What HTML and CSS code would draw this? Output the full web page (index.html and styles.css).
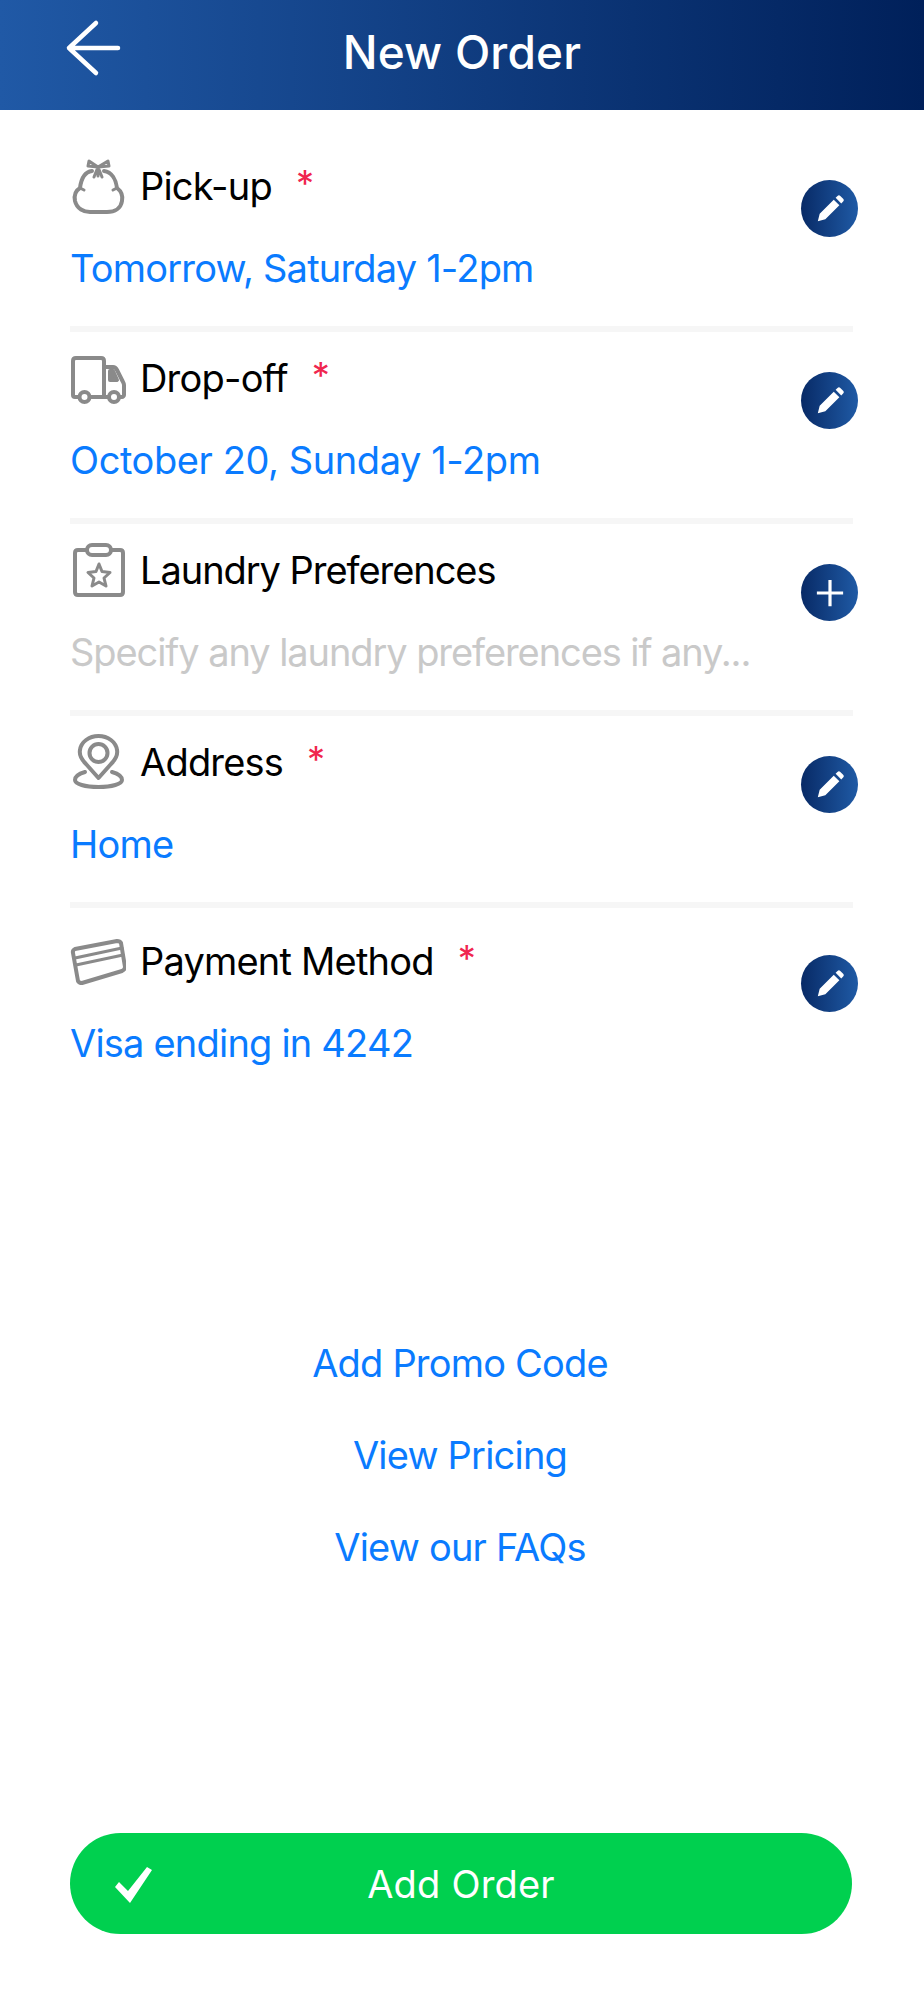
FILE: index.html
```html
<!DOCTYPE html>
<html lang="en">
<head>
  <meta charset="UTF-8">
  <meta name="viewport" content="width=device-width, initial-scale=1.0">
  <title>New Order</title>
  <link rel="stylesheet" href="styles.css">
</head>
<body>
  <header class="topbar">
    <svg class="back" viewBox="0 0 60 60" fill="none" stroke="#fff" stroke-width="4.500" stroke-linecap="round" stroke-linejoin="round">
      <path d="M33 5 L6 30 L33 55 M6 30 H55"/>
    </svg>
    <h1>New Order</h1>
  </header>

  <section class="rows">
    <div class="row">
      <div class="row-main">
        <div class="label">
          <svg class="icon" viewBox="0 0 56 56" fill="none" stroke="#8a8a8a" stroke-width="4" stroke-linecap="round" stroke-linejoin="round">
            <path d="M22 13 C14 14 11 22 10 30 C5 33 4 38 5 43 C7 51 14 54 20 54 H37 C45 54 51 50 52 43 C53 38 51 33 47 30 C46 22 42 14 34 13"/>
            <path d="M28 9 L19 3 L18 8 L28 9 L38 3 L39 8 L28 9 M24 19 L28 9 L32 19 M28 10 V18" stroke-width="3"/>
            <path d="M10 30 L14 32 M47 30 L43 32" stroke-width="3"/>
          </svg>
          <span>Pick-up</span><i class="req">*</i>
        </div>
        <p class="value">Tomorrow, Saturday 1-2pm</p>
      </div>
      <button class="round">
        <svg viewBox="0 0 32 32" fill="#fff"><path d="M3 29 L5 21 L20 6 L26 12 L11 27 Z M22 4 L24 2 C25 1 26 1 27 2 L30 5 C31 6 31 7 30 8 L28 10 Z"/></svg>
      </button>
    </div>

    <div class="row">
      <div class="row-main">
        <div class="label">
          <svg class="icon" viewBox="0 0 56 56" fill="none" stroke="#8a8a8a" stroke-width="4" stroke-linecap="round" stroke-linejoin="round">
            <path d="M9 47 H5 C3.500 47 3 46 3 45 V11 C3 9 4 8 6 8 H31 C33 8 34 9 34 11 V47 H20"/>
            <path d="M34 17 H43 C45 17 46 18 47 20 L52 30 C53 32 54 33 54 35 V45 C54 46 53 47 52 47 H50 M34 47 H38"/>
            <path d="M40 21 H43 L47 30 H40 Z" fill="#8a8a8a"/>
            <circle cx="14.500" cy="47" r="5"/>
            <circle cx="44" cy="47" r="5"/>
          </svg>
          <span>Drop-off</span><i class="req">*</i>
        </div>
        <p class="value loose">October 20, Sunday 1-2pm</p>
      </div>
      <button class="round">
        <svg viewBox="0 0 32 32" fill="#fff"><path d="M3 29 L5 21 L20 6 L26 12 L11 27 Z M22 4 L24 2 C25 1 26 1 27 2 L30 5 C31 6 31 7 30 8 L28 10 Z"/></svg>
      </button>
    </div>

    <div class="row">
      <div class="row-main">
        <div class="label tight">
          <svg class="icon" viewBox="0 0 56 56" fill="none" stroke="#8a8a8a" stroke-width="4" stroke-linecap="round" stroke-linejoin="round">
            <path d="M17 8 H8 C6 8 5 9 5 11 V50 C5 52 6 53 8 53 H50 C52 53 53 52 53 50 V11 C53 9 52 8 50 8 H41"/>
            <rect x="17" y="3" width="24" height="10" rx="5"/>
            <path d="M29 22 L32 29.500 L40 30.500 L34 36 L36 44 L29 40 L22 44 L24 36 L18 30.500 L26 29.500 Z" stroke-width="3"/>
          </svg>
          <span>Laundry Preferences</span>
        </div>
        <p class="value empty">Specify any laundry preferences if any...</p>
      </div>
      <button class="round">
        <svg viewBox="0 0 32 32" fill="none" stroke="#fff" stroke-width="3.400"><path d="M16 2 V30 M2 16 H30"/></svg>
      </button>
    </div>

    <div class="row">
      <div class="row-main">
        <div class="label">
          <svg class="icon" viewBox="0 0 56 56" fill="none" stroke="#8a8a8a" stroke-width="4" stroke-linecap="round" stroke-linejoin="round">
            <path d="M28.500 44 L16 30 C11 25 9 21 10 16 C11 8 19 2 28.500 2 C38 2 46 8 47 16 C48 21 46 25 41 30 Z"/>
            <circle cx="28.500" cy="19" r="9"/>
            <path d="M15 38 C8 40 5 43 5 46 C5 50 15 53 28.500 53 C42 53 52 50 52 46 C52 43 49 40 42 38"/>
          </svg>
          <span>Address</span><i class="req">*</i>
        </div>
        <p class="value">Home</p>
      </div>
      <button class="round">
        <svg viewBox="0 0 32 32" fill="#fff"><path d="M3 29 L5 21 L20 6 L26 12 L11 27 Z M22 4 L24 2 C25 1 26 1 27 2 L30 5 C31 6 31 7 30 8 L28 10 Z"/></svg>
      </button>
    </div>

    <div class="row last">
      <div class="row-main">
        <div class="label">
          <svg class="icon" viewBox="0 0 56 56" fill="none" stroke="#8a8a8a" stroke-width="4" stroke-linecap="round" stroke-linejoin="round">
            <path d="M3 20 C2.500 18 3 17 5 16 L47 8 C49 8 50 8 51 10 L55 34 C55 36 54 37 52 38 L12 50 C10 50 9 50 8 48 Z"/>
            <path d="M5 25 L52 15 M6 32 L53 22" stroke-width="3"/>
          </svg>
          <span>Payment Method</span><i class="req">*</i>
        </div>
        <p class="value">Visa ending in 4242</p>
      </div>
      <button class="round">
        <svg viewBox="0 0 32 32" fill="#fff"><path d="M3 29 L5 21 L20 6 L26 12 L11 27 Z M22 4 L24 2 C25 1 26 1 27 2 L30 5 C31 6 31 7 30 8 L28 10 Z"/></svg>
      </button>
    </div>
  </section>

  <nav class="links">
    <a href="#">Add Promo Code</a>
    <a href="#">View Pricing</a>
    <a href="#">View our FAQs</a>
  </nav>

  <button class="submit">
    <svg viewBox="0 0 42 38" fill="#fff"><path d="M4 21 L8 16 L17 25 L36 1 L41 4 L19 37 Z"/></svg>
    <span>Add Order</span>
  </button>
</body>
</html>
```

FILE: styles.css
```css
* {
  margin: 0;
  padding: 0;
  box-sizing: border-box;
}

body {
  width: 924px;
  height: 2000px;
  overflow: hidden;
  background: #fff;
  font-family: Inter, "Liberation Sans", sans-serif;
  display: flex;
  flex-direction: column;
}

.topbar {
  height: 110px;
  flex: none;
  display: flex;
  align-items: center;
  justify-content: center;
  padding-bottom: 6px;
  position: relative;
  background: linear-gradient(to right, #2059a6, #00205a);
}

.topbar h1 {
  color: #fff;
  font-size: 46px;
  font-weight: 500;
  letter-spacing: 0.2px;
  line-height: 1;
}

.back {
  position: absolute;
  left: 63px;
  top: 18px;
  width: 60px;
  height: 60px;
}

.rows {
  margin-top: 30px;
  padding: 0 70px;
}

.row {
  display: flex;
  justify-content: space-between;
  align-items: flex-start;
  padding: 18px 0 34px;
  border-bottom: 6px solid #f6f6f6;
  margin-right: 1px;
}

.row.last {
  border-bottom: none;
  padding-top: 25px;
}

.label {
  display: flex;
  align-items: center;
  height: 56px;
  font-size: 38px;
  letter-spacing: -0.8px;
  color: #000;
}

.label.tight {
  letter-spacing: -1.05px;
}

.icon {
  width: 56px;
  height: 56px;
  margin-right: 14px;
  flex: none;
}

.req {
  color: #f0264f;
  font-style: normal;
  font-size: 36px;
  margin: -6px 0 0 24px;
}

.value {
  margin-top: 30px;
  font-size: 38px;
  letter-spacing: -0.8px;
  line-height: 48px;
  color: #0a7bff;
  white-space: nowrap;
}

.value.loose {
  letter-spacing: -0.42px;
}

.value.empty {
  color: #c9c9c9;
  letter-spacing: -1.08px;
}

.round {
  width: 57px;
  height: 57px;
  flex: none;
  margin: 22px -5px 0 0;
  border: none;
  border-radius: 50%;
  background: linear-gradient(to right, #082a66, #1f5aa5);
  display: flex;
  align-items: center;
  justify-content: center;
}

.round svg {
  width: 30px;
  height: 30px;
}

.links {
  margin-top: 238px;
  padding-right: 4px;
  display: flex;
  flex-direction: column;
  align-items: center;
  gap: 44px;
}

.links a {
  font-size: 38px;
  letter-spacing: -0.8px;
  line-height: 48px;
  color: #0a7bff;
  text-decoration: none;
}

.submit {
  position: relative;
  margin: auto 72px 66px 70px;
  height: 101px;
  flex: none;
  border: none;
  border-radius: 51px;
  background: #00d04f;
  color: #fff;
  font-family: inherit;
  font-size: 38px;
  letter-spacing: 0.2px;
  display: flex;
  align-items: center;
  justify-content: center;
}

.submit svg {
  position: absolute;
  left: 41px;
  top: 33px;
  width: 42px;
  height: 38px;
}
```
